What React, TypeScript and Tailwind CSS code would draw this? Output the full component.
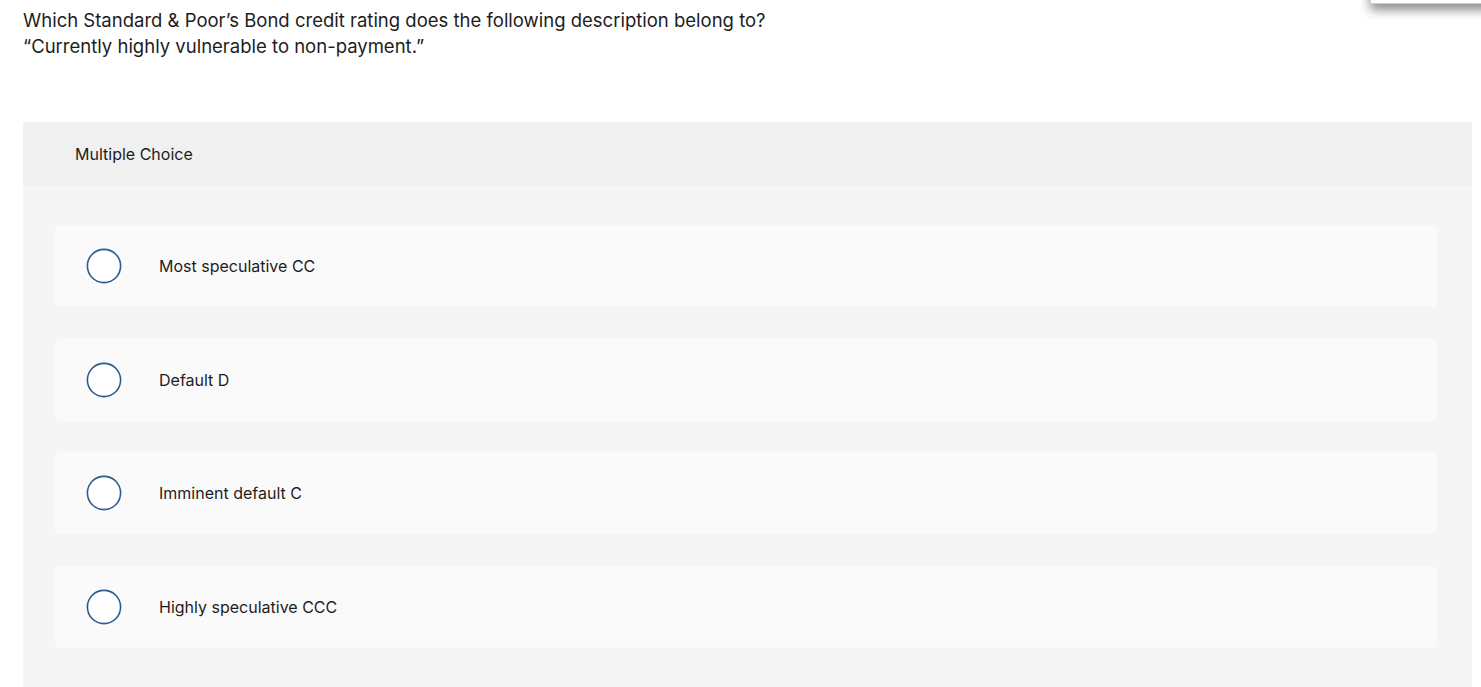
import React from 'react';

const options = ['Most speculative CC', 'Default D', 'Imminent default C', 'Highly speculative CCC'];

const Radio = () => (
  <svg width="36" height="36" viewBox="0 0 36 36" className="ml-[31px] shrink-0">
    <circle cx="18" cy="18" r="16.6" fill="#fff" stroke="#2b5c8d" strokeWidth="1.6" />
  </svg>
);

const OptionRow = ({ label }: { label: string }) => (
  <div className="flex h-[82px] items-center rounded-[5px] bg-[#fafafa]">
    <Radio />
    <span className="ml-[37px] text-[16px] text-[#1d1d1d]">{label}</span>
  </div>
);

export default function App() {
  return (
    <div
      className="relative min-h-[687px] overflow-hidden bg-white"
      style={{ fontFamily: 'Inter, "Open Sans", sans-serif' }}
    >
      {/* floating panel peeking in at the top right */}
      <div className="absolute left-[1370px] top-[-40px] h-[44px] w-[140px] border border-[#cfcfcf] bg-white shadow-[0_6px_10px_rgba(0,0,0,0.45)]" />

      <div className="px-[23px] pt-[7px] text-[18.5px] leading-[26px] text-[#1d1d1d]">
        <p>Which Standard &amp; Poor’s Bond credit rating does the following description belong to?</p>
        <p>“Currently highly vulnerable to non-payment.”</p>
      </div>

      <div className="ml-[23px] mr-[9px] mt-[63px] bg-[#f5f5f5] pb-[40px]">
        <div className="flex h-[63px] items-center bg-[#f0f0f0] pl-[52px] text-[16px] text-[#1d1d1d]">
          Multiple Choice
        </div>
        <div className="flex flex-col gap-[31.5px] pl-[32px] pr-[35px] pt-[40px]">
          {options.map((o) => (
            <OptionRow key={o} label={o} />
          ))}
        </div>
      </div>
    </div>
  );
}
